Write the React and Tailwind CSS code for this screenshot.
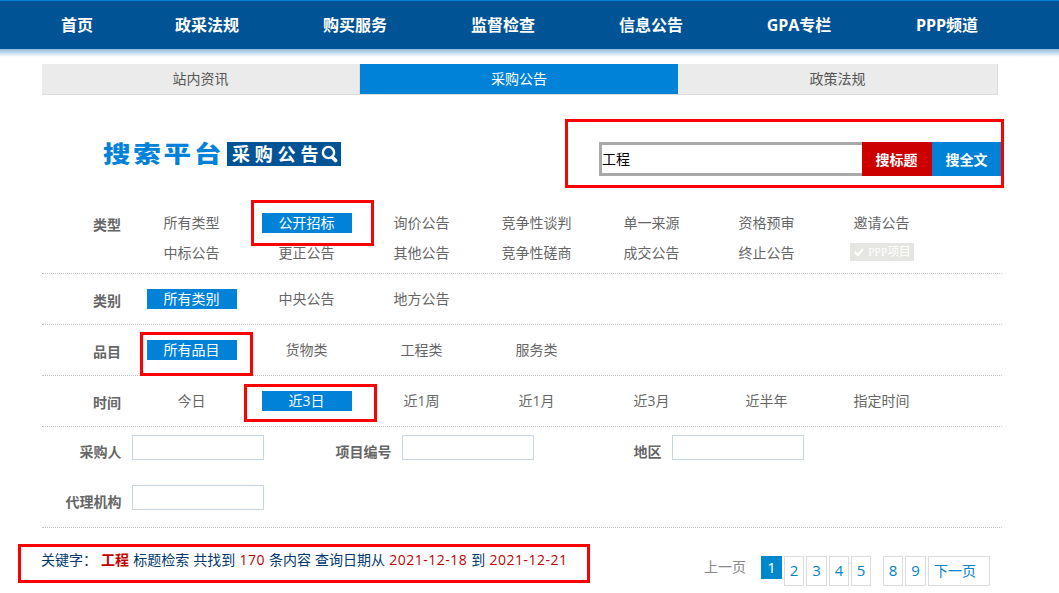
const navItems = ['政采法规', '购买服务', '监督检查', '信息公告', 'GPA专栏', 'PPP频道']

const filters = [
  { label: '类别', options: ['所有类别', '中央公告', '地方公告'], active: '所有类别' },
  { label: '品目', options: ['所有品目', '货物类', '工程类', '服务类'], active: '所有品目' },
  {
    label: '时间',
    options: ['今日', '近3日', '近1周', '近1月', '近3月', '近半年', '指定时间'],
    active: '近3日',
  },
]

const types = [
  '所有类型', '公开招标', '询价公告', '竞争性谈判', '单一来源', '资格预审', '邀请公告',
  '中标公告', '更正公告', '其他公告', '竞争性磋商', '成交公告', '终止公告',
]

// red highlight frames drawn over the page
const frames = [
  'left-[565px] top-[119px] w-[439px] h-[69px]',
  'left-[251px] top-[200px] w-[123px] h-[46px]',
  'left-[140px] top-[332px] w-[113px] h-[44px]',
  'left-[244px] top-[384px] w-[133px] h-[38px]',
  'left-[18px] top-[544px] w-[572px] h-[39px]',
]

function NavBar() {
  return (
    <nav className="flex h-[49px] border-t border-[#0082d9] bg-[#005496] pl-[21px] text-base font-bold leading-[48px] text-white">
      <a className="w-28 text-center">首页</a>
      {navItems.map((item) => (
        <a key={item} className="w-[148px] text-center">{item}</a>
      ))}
    </nav>
  )
}

function Tabs() {
  return (
    <div className="ml-[42px] mt-[7px] flex h-[31px] w-[956px] border-b border-[#dcdcdc] bg-[#ebebeb] text-center leading-[30px] text-[#555]">
      <a className="w-[318px] border-r border-[#dcdcdc]">站内资讯</a>
      <a className="w-[318px] bg-[#0082d9] text-white">采购公告</a>
      <a className="w-[320px] border-r border-[#dcdcdc]">政策法规</a>
    </div>
  )
}

function Logo() {
  return (
    <div className="flex h-6 items-center">
      <div className="w-[125px] origin-center scale-y-[0.82] whitespace-nowrap pl-px text-[27.5px] font-black leading-6 tracking-[2.8px] text-[#0082d9]">
        搜索平台
      </div>
      <div className="flex h-6 w-[114px] items-center bg-[#005496] pl-[5px] text-white">
        <span className="whitespace-nowrap text-[18px] font-bold leading-6 tracking-[4.8px]">采购公告</span>
        <svg width="17" height="18" viewBox="0 0 17 18" fill="none" stroke="currentColor" className="-ml-[2px] shrink-0">
          <circle cx="7.5" cy="7.5" r="5.6" strokeWidth="2.4" />
          <path d="M11.5 12.5l3 3" strokeWidth="3.6" strokeLinecap="round" />
        </svg>
      </div>
    </div>
  )
}

function SearchBar() {
  return (
    <div className="flex h-[34px] font-bold text-white">
      <input
        defaultValue="工程"
        className="w-[263px] border-[3px] border-r-0 border-[#a9a9a9] bg-white pb-0.5 font-normal text-black outline-none"
      />
      <button className="w-[70px] bg-[#cc0000] pr-px">搜标题</button>
      <button className="w-[70px] bg-[#0082d9] pr-px">搜全文</button>
    </div>
  )
}

function Option({ text, active }) {
  return (
    <a className={active ? 'h-5 bg-[#0082d9] pr-px text-center text-white' : 'h-5 pr-px text-center'}>{text}</a>
  )
}

function FilterRow({ label, options, active, children, className = 'h-[51px] pt-[15px]' }) {
  return (
    <div className={`flex border-b border-dotted border-[#c4c4c4] leading-5 ${className}`}>
      <b className="w-[105px] pl-[51px] pt-0.5">{label}</b>
      <div className="grid grid-cols-[repeat(7,90px)] content-start gap-x-[25px] gap-y-2.5 whitespace-nowrap">
        {options.map((o) => (
          <Option key={o} text={o} active={o === active} />
        ))}
        {children}
      </div>
    </div>
  )
}

function PppTag() {
  return (
    <span className="ml-[13px] flex h-[18px] w-16 items-center bg-[#e5e5e2] pl-1 text-white">
      <svg width="10" height="8" viewBox="0 0 10 8" fill="none" stroke="currentColor" strokeWidth="2" className="shrink-0">
        <path d="M1 4l3 3 5-6" />
      </svg>
      <span className="ml-1 flex items-center font-['Liberation_Serif','Noto_Sans_CJK_SC',serif] text-[12px] leading-[18px] tracking-[-0.3px]">
        PPP<span className="text-[12px] leading-[18px]">项目</span>
      </span>
    </span>
  )
}

function Field({ label }) {
  return (
    <label className="flex h-[25px] w-[270px]">
      <b className="mr-[10.5px] w-[79.5px] pt-[7px] text-right leading-5">{label}</b>
      <input className="w-[132px] border border-[#c5d5e1] bg-white outline-none" />
    </label>
  )
}

function Page({ n, className = 'mr-0.5 w-5' }) {
  return (
    <a className={`h-[30px] border border-[#dcdcdc] text-center text-[15px] leading-[27px] ${className}`}>{n}</a>
  )
}

function Pagination() {
  return (
    <div className="flex text-[#0082cc]">
      <span className="w-[57px] leading-[22px] text-[#888]">上一页</span>
      <a className="mr-0.5 h-[23px] w-[21px] bg-[#0088cf] text-center text-[15px] leading-[23px] text-white">1</a>
      <Page n="2" />
      <Page n="3" className="mr-0.5 w-[21px]" />
      <Page n="4" />
      <Page n="5" className="mr-3 w-5" />
      <Page n="8" />
      <Page n="9" className="mr-0.5 w-[21px]" />
      <a className="h-[30px] w-[62px] border border-[#dcdcdc] pl-[5px] leading-7">下一页</a>
    </div>
  )
}

export default function App() {
  return (
    <div className="relative h-[593px] w-[1059px] overflow-hidden bg-white font-['Open_Sans','Noto_Sans_CJK_SC',sans-serif] text-[14px] text-[#666]">
      <NavBar />
      <div className="h-2 bg-gradient-to-b from-[#8db9da] to-white" />
      <Tabs />

      <div className="ml-[102px] mt-[47px] flex h-[60px] w-[900px] justify-between">
        <Logo />
        <SearchBar />
      </div>

      <div className="ml-[42px] w-[960px]">
        <FilterRow label="类型" options={types} active="公开招标" className="h-[72px] pt-[11px]">
          <PppTag />
        </FilterRow>
        {filters.map((f) => (
          <FilterRow key={f.label} {...f} />
        ))}
        <div className="flex h-[101px] flex-wrap content-start gap-y-[25px] border-b border-dotted border-[#c4c4c4] pt-2">
          <Field label="采购人" />
          <Field label="项目编号" />
          <Field label="地区" />
          <Field label="代理机构" />
        </div>

        <div className="flex whitespace-nowrap pt-7">
          <p className="-ml-px -mt-1.5 mr-px w-[662px] leading-5 text-[#00396f] [word-spacing:0.45px]">
            关键字： <b className="text-[#c00000]">工程</b> 标题检索 共找到{' '}
            <span className="tracking-[0.5px] text-[#c00000]">170</span> 条内容 查询日期从{' '}
            <span className="tracking-[0.5px] text-[#c00000]">2021-12-18</span> 到{' '}
            <span className="tracking-[0.5px] text-[#c00000]">2021-12-21</span>
          </p>
          <Pagination />
        </div>
      </div>

      {frames.map((f) => (
        <div key={f} className={`pointer-events-none absolute border-[3px] border-[#ff0000] ${f}`} />
      ))}
    </div>
  )
}
